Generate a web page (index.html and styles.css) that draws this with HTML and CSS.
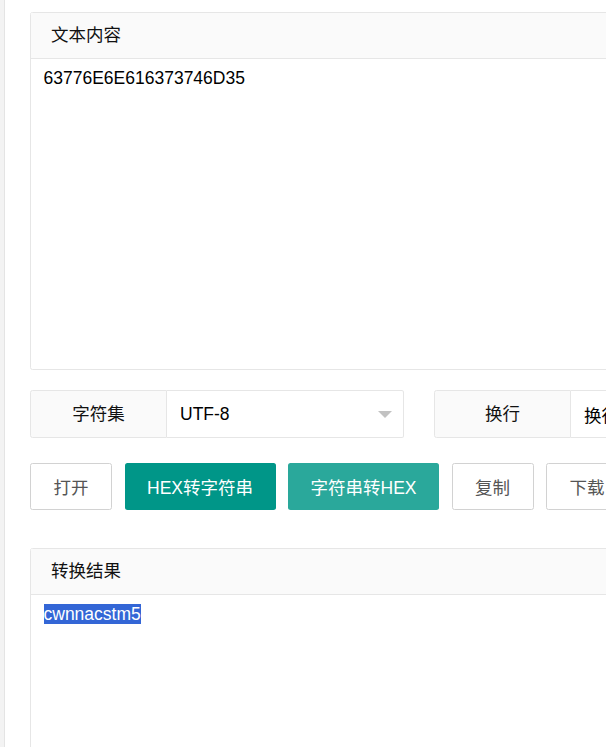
FILE: index.html
```html
<!DOCTYPE html>
<html lang="zh-CN">
<head>
<meta charset="utf-8">
<title>HEX转字符串</title>
<link rel="stylesheet" href="styles.css">
</head>
<body>
<div class="sidebar"></div>
<div class="main">
  <div class="panel">
    <div class="panel-head">文本内容</div>
    <div class="panel-body input-body">63776E6E616373746D35</div>
  </div>

  <div class="form-row">
    <div class="field">
      <div class="label">字符集</div>
      <div class="select">
        <span class="select-text">UTF-8</span>
        <span class="caret"></span>
      </div>
    </div>
    <div class="field field-2">
      <div class="label">换行</div>
      <div class="select">
        <span class="select-text">换行符</span>
        <span class="caret"></span>
      </div>
    </div>
  </div>

  <div class="btn-row">
    <button class="btn btn-plain">打开</button>
    <button class="btn btn-main">HEX转字符串</button>
    <button class="btn btn-main btn-light">字符串转HEX</button>
    <button class="btn btn-plain">复制</button>
    <button class="btn btn-plain">下载</button>
  </div>

  <div class="panel panel-result">
    <div class="panel-head">转换结果</div>
    <div class="panel-body result-body"><span class="sel">cwnnacstm5</span></div>
  </div>
</div>
</body>
</html>
```

FILE: styles.css
```css
* {
  box-sizing: border-box;
}

html, body {
  margin: 0;
  padding: 0;
  height: 100%;
  overflow: hidden;
  background: #ffffff;
}

body {
  display: flex;
  font-family: "Liberation Sans", "Noto Sans CJK SC", sans-serif;
  font-size: 17.5px;
  color: #111;
}

.sidebar {
  width: 5px;
  flex: none;
  background: #f3f3f3;
  border-right: 1px solid #e4e4e4;
  height: 100%;
}

.main {
  flex: none;
  width: 800px;
  padding: 12px 0 0 25px;
}

.panel {
  width: 720px;
  border: 1px solid #e6e6e6;
  border-radius: 2.5px;
  background: #fff;
}

.panel-head {
  height: 46px;
  line-height: 45px;
  padding-left: 20px;
  background: #fafafa;
  border-bottom: 1px solid #e6e6e6;
  color: #111;
}

.panel-body {
  padding: 7px 12.5px;
  line-height: 25px;
  white-space: pre;
  color: #000;
}

.input-body {
  height: 310px;
}

.result-body {
  height: 300px;
}

.sel {
  background: #3366d6;
  color: #fff;
}

.form-row {
  display: flex;
  margin-top: 20px;
}

.field {
  display: flex;
  height: 48px;
}

.field-2 {
  margin-left: 30px;
}

.label {
  width: 137px;
  height: 48px;
  line-height: 46px;
  text-align: center;
  background: #fafafa;
  border: 1px solid #e6e6e6;
  border-radius: 2.5px 0 0 2.5px;
  color: #111;
}

.select {
  width: 237px;
  height: 48px;
  border: 1px solid #e6e6e6;
  border-left: none;
  border-radius: 0 2.5px 2.5px 0;
  display: flex;
  align-items: center;
  justify-content: space-between;
  padding: 0 11px 0 13px;
  color: #000;
}

.caret {
  width: 0;
  height: 0;
  border-style: solid;
  border-width: 7px 7px 0 7px;
  border-color: #c2c2c2 transparent transparent transparent;
  margin-top: 1px;
}

.btn-row {
  display: flex;
  gap: 12.5px;
  margin-top: 25px;
}

.btn {
  height: 47px;
  padding: 0;
  text-align: center;
  font-family: "Liberation Sans", "Noto Sans CJK SC", sans-serif;
  font-size: 17.5px;
  border-radius: 2.5px;
  border: 1px solid transparent;
  white-space: nowrap;
  flex: none;
}

.btn-plain {
  width: 82px;
  background: #fff;
  border-color: #d2d2d2;
  color: #555;
}

.btn-main {
  width: 151px;
  background: #009688;
  color: #fff;
}

.btn-light {
  background: #2aa89b;
}

.panel-result {
  margin-top: 38px;
}
```
